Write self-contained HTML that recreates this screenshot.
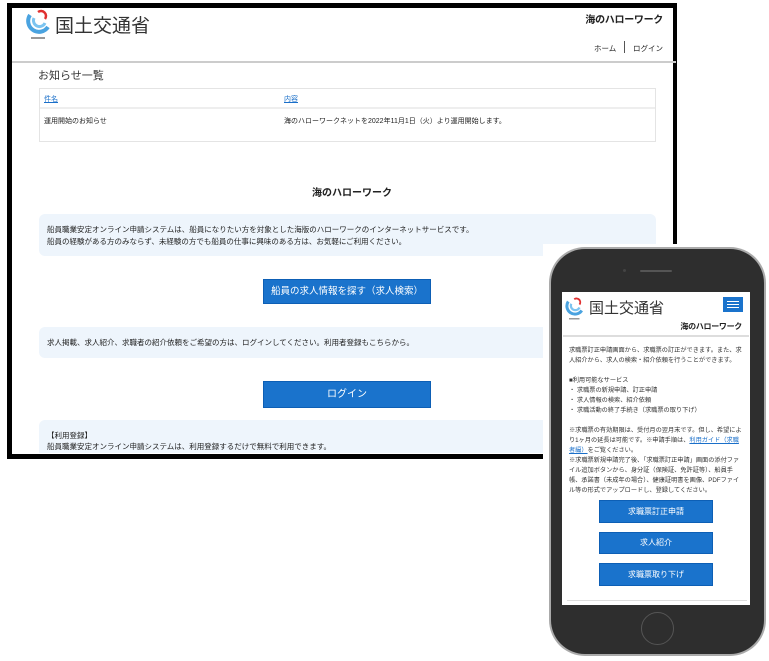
<!DOCTYPE html>
<html><head><meta charset="utf-8"><style>
*{margin:0;padding:0;box-sizing:border-box}
body{width:769px;height:661px;background:#fff;position:relative;overflow:hidden;font-family:"Liberation Sans","Noto Sans CJK JP",sans-serif;color:#222}
.a{position:absolute;white-space:nowrap}
.btn{position:absolute;background:#1a73cc;color:#fff;text-align:center;border:1px solid #0d5fb5}
.box{position:absolute;background:#eef5fc;border-radius:6px}
</style></head><body>
<div class="a" style="left:7px;top:3px;width:670px;height:456px;border:5px solid #000;border-right-width:4px;background:#fff"></div>
<!-- laptop header -->
<svg class="a" style="left:26px;top:9px" width="26" height="32" viewBox="0 0 26 32">
<path d="M4 6 A10 10 0 0 0 22 18" stroke="#4aa3e0" stroke-width="4" fill="none"/>
<path d="M8 9 A6 6 0 0 0 19 14" stroke="#7cc4f0" stroke-width="3" fill="none"/>
<path d="M12 3 A5 5 0 0 1 19 10" stroke="#e03030" stroke-width="2.5" fill="none"/>
<rect x="5" y="28" width="14" height="2" fill="#999"/></svg>
<div class="a" style="left:55px;top:11px;font-size:19px;color:#333">国土交通省</div>
<div class="a" style="right:106px;top:11px;font-size:10px;font-weight:bold;letter-spacing:-0.3px">海のハローワーク</div>
<div class="a" style="left:594px;top:43px;font-size:7.5px">ホーム</div>
<div class="a" style="left:624px;top:41px;width:1px;height:12px;background:#555"></div>
<div class="a" style="right:106px;top:43px;font-size:7.5px">ログイン</div>
<div class="a" style="left:12px;top:61px;width:664px;height:2px;background:#ccc"></div>
<div class="a" style="left:38px;top:67px;font-size:11px;color:#333">お知らせ一覧</div>
<div class="a" style="left:39px;top:88px;width:617px;height:54px;border:1px solid #e4e4e4"></div>
<div class="a" style="left:40px;top:107px;width:615px;height:2px;background:#eee"></div>
<div class="a" style="left:44px;top:94px;font-size:7px;color:#1a6fc9;text-decoration:underline">件名</div>
<div class="a" style="left:284px;top:94px;font-size:7px;color:#1a6fc9;text-decoration:underline">内容</div>
<div class="a" style="left:44px;top:116px;font-size:7px">運用開始のお知らせ</div>
<div class="a" style="left:284px;top:116px;font-size:7px">海のハローワークネットを2022年11月1日（火）より運用開始します。</div>
<div class="a" style="left:312px;top:184px;font-size:10px;font-weight:bold">海のハローワーク</div>
<div class="box" style="left:39px;top:214px;width:617px;height:42px"></div>
<div class="a" style="left:47px;top:224px;font-size:7.5px;line-height:12px">船員職業安定オンライン申請システムは、船員になりたい方を対象とした海版のハローワークのインターネットサービスです。<br>船員の経験がある方のみならず、未経験の方でも船員の仕事に興味のある方は、お気軽にご利用ください。</div>
<div class="btn" style="left:263px;top:279px;width:168px;height:25px;font-size:9.5px;line-height:23px">船員の求人情報を探す（求人検索）</div>
<div class="box" style="left:39px;top:327px;width:617px;height:31px"></div>
<div class="a" style="left:47px;top:337px;font-size:7.5px">求人掲載、求人紹介、求職者の紹介依頼をご希望の方は、ログインしてください。利用者登録もこちらから。</div>
<div class="btn" style="left:263px;top:381px;width:168px;height:27px;font-size:10px;line-height:25px">ログイン</div>
<div class="box" style="left:39px;top:420px;width:617px;height:33px;border-radius:6px 6px 0 0"></div>
<div class="a" style="left:47px;top:430px;font-size:7.5px;line-height:11px">【利用登録】<br>船員職業安定オンライン申請システムは、利用登録するだけで無料で利用できます。</div>
<!-- phone -->
<div class="a" style="left:543px;top:244px;width:226px;height:417px;background:#fff"></div>
<div class="a" style="left:549px;top:247px;width:217px;height:409px;border-radius:36px;background:#aaa"></div>
<div class="a" style="left:551px;top:249px;width:213px;height:405px;border-radius:34px;background:#2e2e2e"></div>
<div class="a" style="left:640px;top:270px;width:32px;height:2px;background:#555;border-radius:1px"></div>
<div class="a" style="left:623px;top:269px;width:3px;height:3px;background:#444;border-radius:50%"></div>
<div class="a" style="left:641px;top:612px;width:33px;height:33px;border:1px solid #555;border-radius:50%"></div>
<div class="a" style="left:562px;top:292px;width:188px;height:313px;background:#fff;overflow:hidden"></div>
<svg class="a" style="left:565px;top:297px" width="20" height="24" viewBox="0 0 26 32">
<path d="M4 6 A10 10 0 0 0 22 18" stroke="#4aa3e0" stroke-width="4" fill="none"/>
<path d="M8 9 A6 6 0 0 0 19 14" stroke="#7cc4f0" stroke-width="3" fill="none"/>
<path d="M12 3 A5 5 0 0 1 19 10" stroke="#e03030" stroke-width="2.5" fill="none"/>
<rect x="5" y="28" width="14" height="2" fill="#999"/></svg>
<div class="a" style="left:589px;top:297px;font-size:15px;color:#333">国土交通省</div>
<div class="a" style="left:723px;top:297px;width:20px;height:15px;background:#1a73cc"></div>
<div class="a" style="left:727px;top:301px;width:12px;height:7px;border-top:1px solid #fff;border-bottom:1px solid #fff"></div>
<div class="a" style="left:727px;top:304px;width:12px;height:1px;background:#fff"></div>
<div class="a" style="right:27px;top:321px;font-size:8px;font-weight:bold;letter-spacing:-0.3px">海のハローワーク</div>
<div class="a" style="left:563px;top:335px;width:186px;height:2px;background:#ddd"></div>
<div class="a" style="left:569px;top:346px;font-size:6.2px;line-height:10px;color:#333;white-space:normal;width:176px">求職票訂正申請画面から、求職票の訂正ができます。また、求人紹介から、求人の検索・紹介依頼を行うことができます。<br><br>■利用可能なサービス<br>・ 求職票の新規申請、訂正申請<br>・ 求人情報の検索、紹介依頼<br>・ 求職活動の終了手続き（求職票の取り下げ）<br><br>※求職票の有効期限は、受付月の翌月末です。但し、希望により1ヶ月の延長は可能です。※申請手順は、<span style="color:#1a6fc9;text-decoration:underline">利用ガイド（求職者編）</span>をご覧ください。<br>※求職票新規申請完了後、「求職票訂正申請」画面の添付ファイル追加ボタンから、身分証（保険証、免許証等）、船員手帳、承諾書（未成年の場合）、健康証明書を画像、PDFファイル等の形式でアップロードし、登録してください。</div>
<div class="btn" style="left:599px;top:500px;width:114px;height:23px;font-size:8px;line-height:21px">求職票訂正申請</div>
<div class="btn" style="left:599px;top:532px;width:114px;height:22px;font-size:8px;line-height:20px">求人紹介</div>
<div class="btn" style="left:599px;top:563px;width:114px;height:23px;font-size:8px;line-height:21px">求職票取り下げ</div>
<div class="a" style="left:567px;top:600px;width:180px;height:1px;background:#ddd"></div>
</body></html>
